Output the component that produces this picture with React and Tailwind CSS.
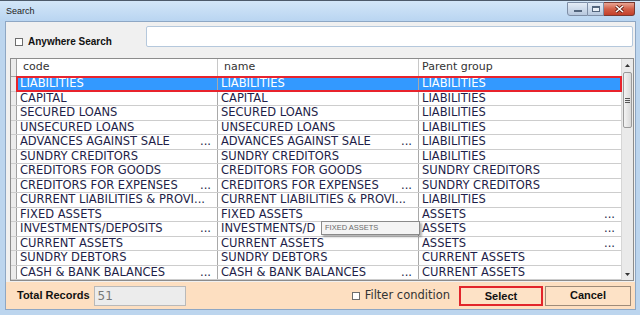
const ROWS = [
  { code: "LIABILITIES", name: "LIABILITIES", parent: "LIABILITIES" },
  { code: "CAPITAL", name: "CAPITAL", parent: "LIABILITIES" },
  { code: "SECURED LOANS", name: "SECURED LOANS", parent: "LIABILITIES" },
  { code: "UNSECURED LOANS", name: "UNSECURED LOANS", parent: "LIABILITIES" },
  { code: "ADVANCES AGAINST SALE", name: "ADVANCES AGAINST SALE", parent: "LIABILITIES", codeDots: true, nameDots: true },
  { code: "SUNDRY CREDITORS", name: "SUNDRY CREDITORS", parent: "LIABILITIES" },
  { code: "CREDITORS FOR GOODS", name: "CREDITORS FOR GOODS", parent: "SUNDRY CREDITORS" },
  { code: "CREDITORS FOR EXPENSES", name: "CREDITORS FOR EXPENSES", parent: "SUNDRY CREDITORS", codeDots: true, nameDots: true },
  { code: "CURRENT LIABILITIES & PROVI...", name: "CURRENT LIABILITIES & PROVI...", parent: "LIABILITIES" },
  { code: "FIXED ASSETS", name: "FIXED ASSETS", parent: "ASSETS", parentDots: true },
  // the tooltip hides the rest of this name cell
  { code: "INVESTMENTS/DEPOSITS", name: "INVESTMENTS/D", parent: "ASSETS", codeDots: true, parentDots: true },
  { code: "CURRENT ASSETS", name: "CURRENT ASSETS", parent: "ASSETS", parentDots: true },
  { code: "SUNDRY DEBTORS", name: "SUNDRY DEBTORS", parent: "CURRENT ASSETS" },
  { code: "CASH & BANK BALANCES", name: "CASH & BANK BALANCES", parent: "CURRENT ASSETS", codeDots: true, nameDots: true },
];

const Cell = ({ text, dots, last }) => (
  <div className={`flex items-center justify-between overflow-hidden whitespace-nowrap pl-[3px] pr-[6px] ${last ? "" : "border-r border-[#a9a9a9]"}`}>
    <span>{text}</span>
    {dots && <span>...</span>}
  </div>
);

const Checkbox = () => (
  <span className="inline-block w-[8px] h-[8px] border border-[#6d6d6d] bg-white" />
);

const WindowButtons = () => (
  <div className="flex items-start pt-[1px]">
    <div className="w-[21px] h-[14px] rounded-bl-[3px] border border-[#7e8ea6] bg-gradient-to-b from-[#e4ecf6] to-[#b7c8de] flex items-center justify-center">
      <span className="block w-[8px] h-[2px] bg-white border border-[#53657d] mt-[3px]" />
    </div>
    <div className="w-[16px] h-[14px] border-y border-r border-[#7e8ea6] bg-gradient-to-b from-[#e4ecf6] to-[#b7c8de] flex items-center justify-center">
      <span className="block w-[8px] h-[6px] border border-[#53657d] border-t-2 bg-white/60" />
    </div>
    <div className="w-[31px] h-[14px] rounded-br-[3px] border-y border-r border-[#7a3a32] bg-gradient-to-b from-[#e8a493] via-[#d25f48] to-[#c3402b] flex items-center justify-center">
      <svg width="9" height="8" viewBox="0 0 9 8">
        <path d="M1 1 L8 7 M8 1 L1 7" stroke="#5a1a10" strokeWidth="3" />
        <path d="M1 1 L8 7 M8 1 L1 7" stroke="#fff" strokeWidth="1.6" />
      </svg>
    </div>
  </div>
);

const Scrollbar = () => (
  <div className="w-[12px] flex flex-col bg-[#eaeaea] border-l border-[#d6d6d6]">
    <div className="h-[12px] flex items-center justify-center">
      <svg width="5" height="3" viewBox="0 0 5 3"><path d="M0 3 L2.5 0 L5 3 Z" fill="#333" /></svg>
    </div>
    <div className="mt-[1px] h-[56px] mx-[1px] rounded-[2px] border border-[#9a9a9a] bg-gradient-to-r from-[#f3f3f3] to-[#d9d9d9] flex flex-col items-center justify-center gap-[1px]">
      <span className="block w-[5px] h-px bg-[#555]" />
      <span className="block w-[5px] h-px bg-[#555]" />
      <span className="block w-[5px] h-px bg-[#555]" />
    </div>
    <div className="flex-1" />
    <div className="h-[12px] flex items-center justify-center">
      <svg width="5" height="3" viewBox="0 0 5 3"><path d="M0 0 L2.5 3 L5 0 Z" fill="#333" /></svg>
    </div>
  </div>
);

export default function App() {
  return (
    <div className="w-[640px] h-[315px] overflow-hidden flex flex-col bg-[#bcd5ee] border-t border-[#4d5a6a] font-['DejaVu_Sans',sans-serif]">
      <div className="h-[20px] flex items-start justify-between pl-[6px] pr-[5px] bg-gradient-to-b from-[#d3e6f8] to-[#b9d5f1]">
        <span className="text-[9px] leading-none mt-[6px] text-[#222] font-['Liberation_Sans',sans-serif]">Search</span>
        <WindowButtons />
      </div>
      <div className="flex-1 flex px-[5px] pr-[6px]">
        <div className="flex-1 flex flex-col bg-[#f0f0f0] border border-[#8ea7c4]">
          <div className="h-[36px] flex items-start">
            <div className="flex items-center gap-[5px] ml-[9px] mt-[12px]">
              <Checkbox />
              <span className="text-[10px] font-bold text-[#111] font-['Liberation_Sans',sans-serif]">Anywhere Search</span>
            </div>
            <div className="ml-auto mr-[2px] mt-[4px] w-[487px] h-[21px] bg-white border border-[#b5c8dc] rounded-[2px]" />
          </div>
          <div className="ml-[4px] mr-[1px] h-[223px] flex border border-[#8c8c8c] bg-white">
            <div className="flex-1 flex flex-col">
              <div className="h-[18px] grid grid-cols-[6px_201px_201px_202px] border-b border-[#a0a0a0] text-[11px] text-[#333]">
                <div className="bg-[#ececec] border-r border-[#a0a0a0]" />
                <div className="flex items-center pl-[6px] border-r border-[#c8c8c8]">code</div>
                <div className="flex items-center pl-[6px] border-r border-[#c8c8c8]">name</div>
                <div className="flex items-center pl-[3px]">Parent group</div>
              </div>
              <div className="relative flex-1 flex flex-col text-[11.5px] leading-none">
                {ROWS.map((r, i) => (
                  <div
                    key={r.code}
                    className={`h-[14.5px] grid grid-cols-[6px_201px_201px_202px] border-b border-[#cdcdcd] ${i === 0 ? "text-white" : "text-[#1e1e48]"}`}
                  >
                    <div className="bg-[#ececec] border-r border-[#a0a0a0]" />
                    <div className={`col-span-3 grid grid-cols-[201px_201px_202px] ${i === 0 ? "bg-[#3399ff] outline-2 outline-[#e8232c] -outline-offset-1" : ""}`}>
                      <Cell text={r.code} dots={r.codeDots} />
                      <Cell text={r.name} dots={r.nameDots} />
                      <Cell text={r.parent} dots={r.parentDots} last />
                    </div>
                  </div>
                ))}
                <div className="absolute left-[310px] top-[144px] w-[99px] h-[14px] bg-[#f4f4f4] border border-[#8a8a8a] shadow-[2px_2px_2px_rgba(0,0,0,0.3)] flex items-center pl-[3px] text-[7.5px] text-[#6a6a6a] font-['Liberation_Sans',sans-serif]">
                  FIXED ASSETS
                </div>
              </div>
            </div>
            <Scrollbar />
          </div>
          <div className="mt-[1px] flex-1 flex items-center bg-[#fddfc1] pl-[11px] pr-[4px]">
            <span className="text-[11px] font-bold text-[#111] font-['Liberation_Sans',sans-serif]">Total Records</span>
            <div className="ml-[4px] w-[92px] h-[20px] border border-[#b9b9b9] bg-[#ececec] flex items-center pl-[3px] text-[12px] text-[#777]">51</div>
            <div className="ml-auto flex items-center gap-[5px]">
              <Checkbox />
              <span className="text-[11.5px] text-[#333]">Filter condition</span>
            </div>
            <button className="ml-[9px] w-[84px] h-[20px] border-2 border-[#e2252b] bg-[#fde2c6] text-[11px] font-bold text-[#111] font-['Liberation_Sans',sans-serif]">Select</button>
            <button className="ml-[2px] w-[86px] h-[20px] border border-[#9e8b79] bg-[#fde2c6] text-[11px] font-bold text-[#111] font-['Liberation_Sans',sans-serif]">Cancel</button>
          </div>
        </div>
      </div>
      <div className="h-[5px]" />
    </div>
  );
}
